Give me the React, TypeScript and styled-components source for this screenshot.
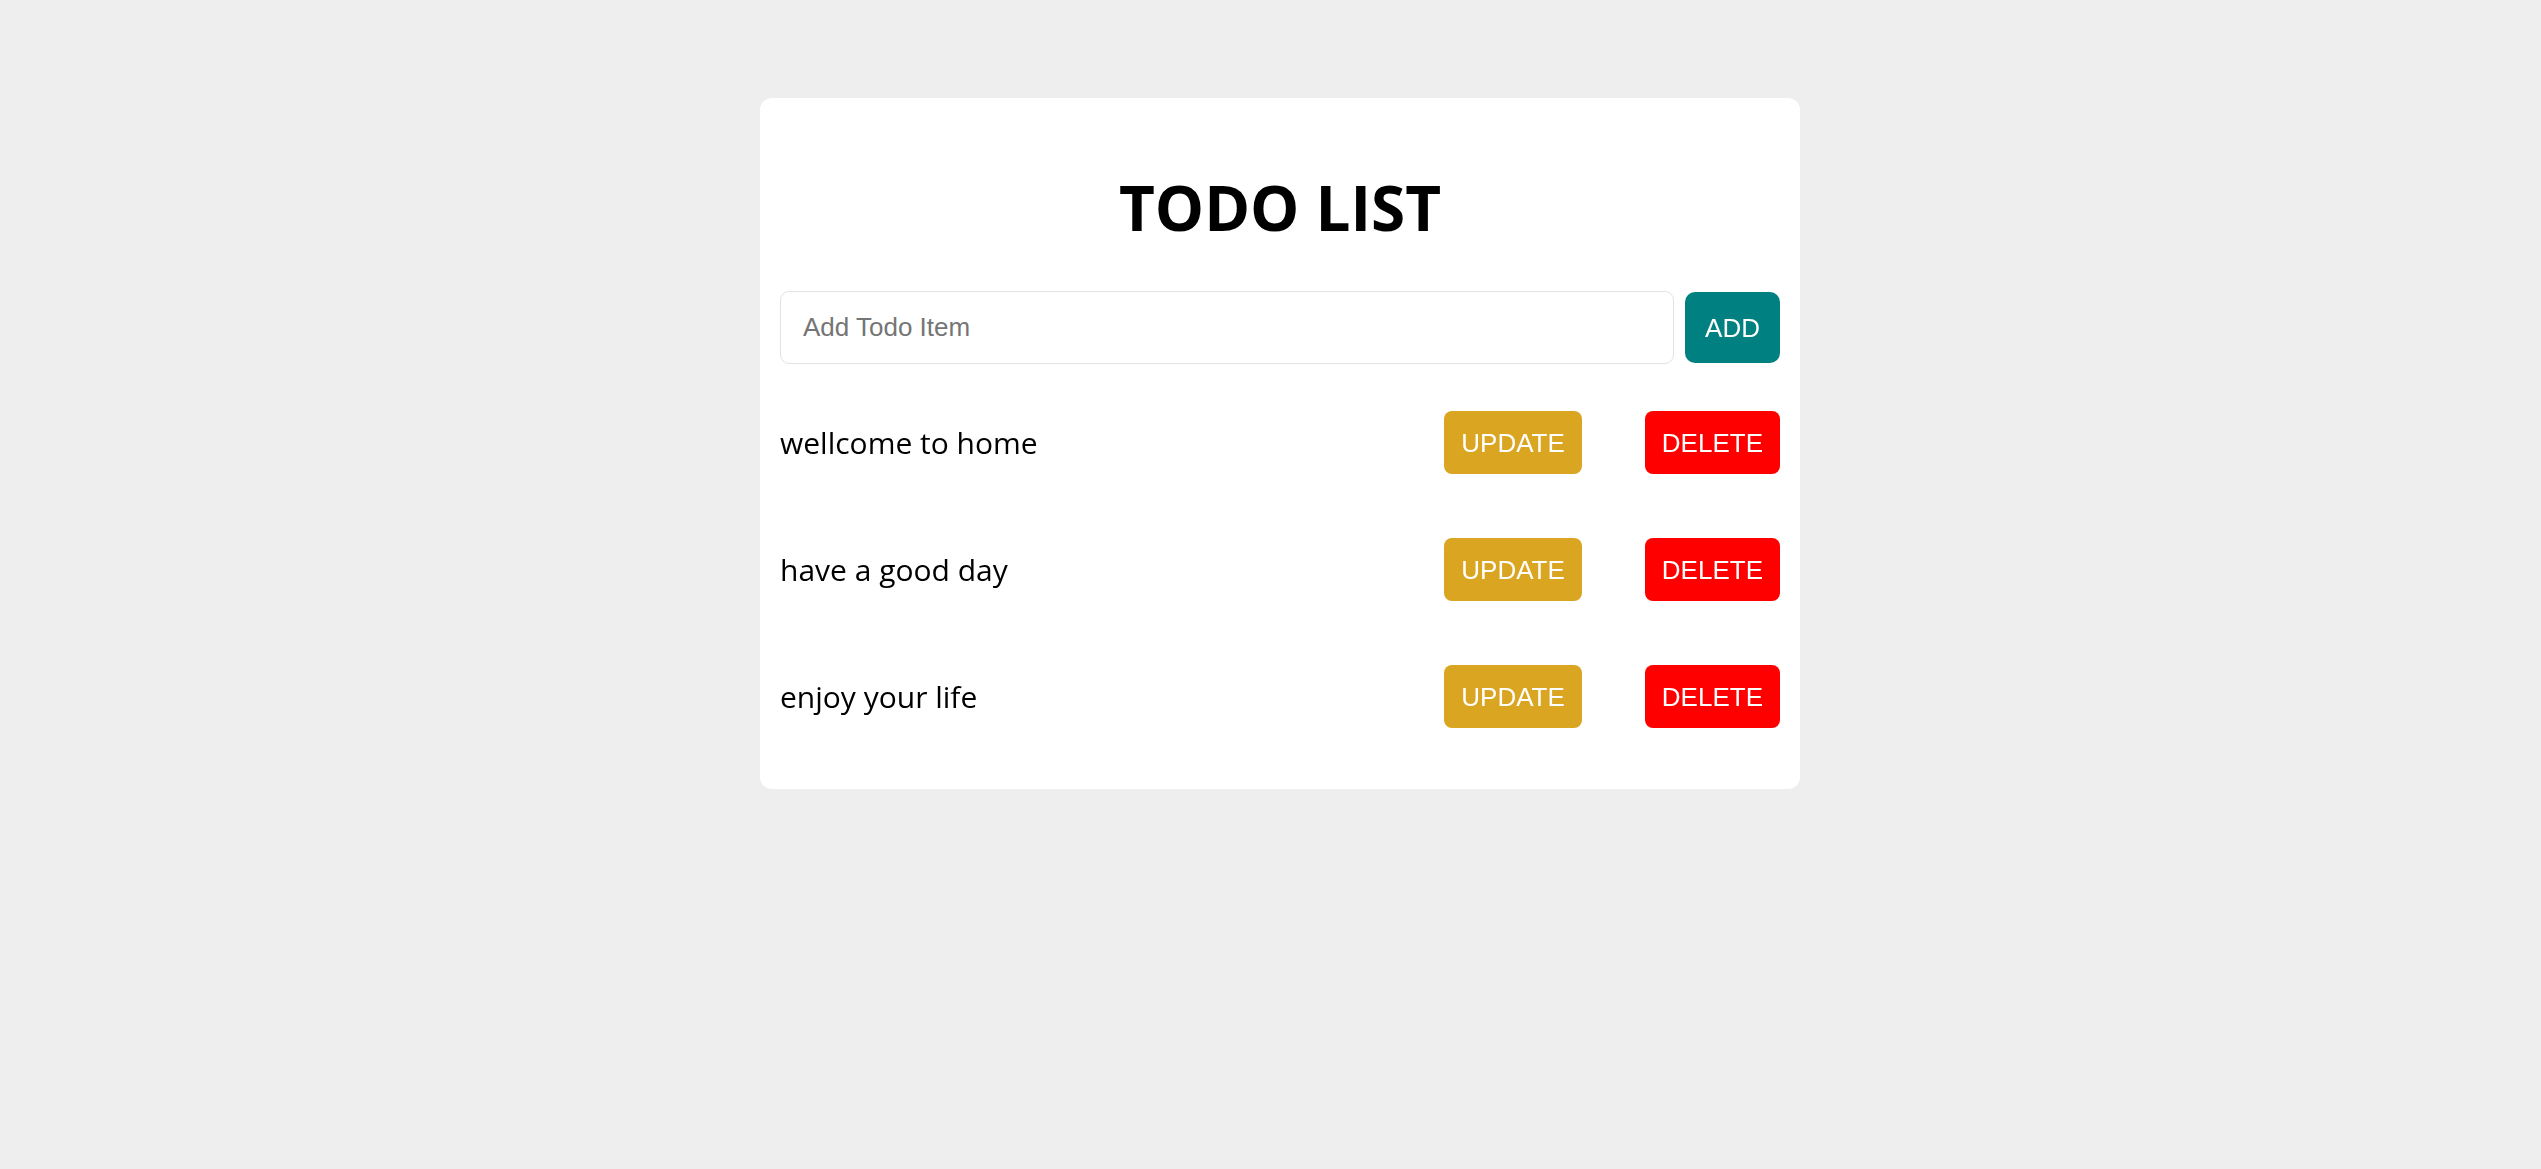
import React, { useState } from "react";
import styled, { createGlobalStyle } from "styled-components";

const GlobalStyle = createGlobalStyle`
  html, body {
    margin: 0;
    padding: 0;
    background: #eeeeee;
  }
  * { box-sizing: border-box; }
`;

const Page = styled.div`
  min-height: 1169px;
  display: flex;
  justify-content: center;
  align-items: flex-start;
  padding: 98px 0 0 19px;
  background: #eeeeee;
`;

const Card = styled.div`
  width: 1040px;
  background: #ffffff;
  border-radius: 12px;
  padding: 78px 20px 61px;
  display: flex;
  flex-direction: column;
`;

const Title = styled.h1`
  margin: 0 0 53px;
  font-family: "Open Sans", "Noto Sans", sans-serif;
  font-weight: 700;
  font-size: 62px;
  line-height: 1;
  text-align: center;
  color: #000;
`;

const InputRow = styled.div`
  display: flex;
  align-items: center;
  gap: 11px;
`;

const TodoInput = styled.input`
  flex: 1;
  height: 73px;
  border: 1px solid #e3e3e3;
  border-radius: 9px;
  padding: 0 20px 0 22px;
  font-family: "Liberation Sans", Arial, sans-serif;
  font-size: 26px;
  color: #000;
  caret-color: #000;
  outline: none;
  &::placeholder {
    color: #757575;
  }
`;

const Button = styled.button<{ $bg: string; $padX: number; $h: number; $radius: number }>`
  height: ${(p) => p.$h}px;
  padding: 0 ${(p) => p.$padX}px;
  border: none;
  border-radius: ${(p) => p.$radius}px;
  background: ${(p) => p.$bg};
  color: #ffffff;
  font-family: "Liberation Sans", Arial, sans-serif;
  font-size: 26px;
  line-height: 1;
  cursor: pointer;
  flex-shrink: 0;
`;

const List = styled.ul`
  list-style: none;
  margin: 47px 0 0;
  padding: 0;
  display: flex;
  flex-direction: column;
  gap: 64px;
`;

const Row = styled.li`
  display: flex;
  align-items: center;
  gap: 63px;
`;

const ItemText = styled.span`
  flex: 1;
  font-family: "Open Sans", "Noto Sans", sans-serif;
  font-size: 30px;
  color: #000;
`;

const items = ["wellcome to home", "have a good day", "enjoy your life"];

export default function App() {
  const [value, setValue] = useState("");
  return (
    <>
      <GlobalStyle />
      <Page>
        <Card>
          <Title>TODO LIST</Title>
          <InputRow>
            <TodoInput
              autoFocus
              placeholder="Add Todo Item"
              value={value}
              onChange={(e) => setValue(e.target.value)}
            />
            <Button $bg="#008080" $padX={20} $h={71} $radius={10}>
              ADD
            </Button>
          </InputRow>
          <List>
            {items.map((t) => (
              <Row key={t}>
                <ItemText>{t}</ItemText>
                <Button $bg="#daa520" $padX={17} $h={63} $radius={8}>
                  UPDATE
                </Button>
                <Button $bg="#ff0000" $padX={17} $h={63} $radius={8}>
                  DELETE
                </Button>
              </Row>
            ))}
          </List>
        </Card>
      </Page>
    </>
  );
}
